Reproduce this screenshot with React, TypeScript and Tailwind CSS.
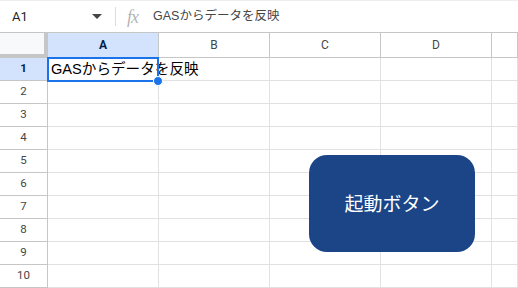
const cols = ['A', 'B', 'C', 'D', ''];
const rows = [1, 2, 3, 4, 5, 6, 7, 8, 9, 10];

export default function App() {
  return (
    <div className="relative w-[518px] h-[288px] overflow-hidden bg-white font-['Roboto','Noto_Sans_CJK_JP',sans-serif]">
      {/* formula bar */}
      <div className="flex items-center h-[32px] border-t border-[#eeeeee]">
        <div className="w-[86px] pl-[12px] text-[13px] text-[#1f1f1f]">A1</div>
        <svg width="10" height="6" viewBox="0 0 10 6" className="ml-[6px]">
          <path d="M0 0h10L5 5z" fill="#444746" />
        </svg>
        <div className="ml-[13px] w-px h-[19px] bg-[#dadce0]" />
        <div className="ml-[11px] w-[16px] text-[18px] leading-none italic text-[#b5b5b5] font-['Liberation_Serif',serif] tracking-[-1px]">
          fx
        </div>
        <div className="ml-[10px] text-[12.5px] text-[#444746] font-['Liberation_Sans','Noto_Sans_CJK_JP',sans-serif]">
          GASからデータを反映
        </div>
      </div>

      {/* grid */}
      <div className="grid grid-cols-[48px_111px_111px_111px_111px_1fr]">
        <div className="h-[26px] bg-[#f8f9fa] border-t border-t-[#c4c7c5] border-r-[4px] border-b-[4px] border-[#c4c7c5]" />
        {cols.map((c, i) => (
          <div
            key={i}
            className={`h-[26px] flex items-center justify-center text-[12px] border-t border-t-[#c4c7c5] border-r border-b border-[#c4c7c5] ${
              c === 'A' ? 'bg-[#d3e3fd] font-bold text-[#041e49]' : 'bg-white text-[#444746]'
            }`}
          >
            {c}
          </div>
        ))}
        {rows.map((r) => (
          <div key={r} className="contents">
            <div
              className={`h-[23px] flex items-center justify-center text-[11.5px] border-r border-b border-[#c4c7c5] ${
                r === 1 ? 'bg-[#d3e3fd] font-bold text-[#041e49]' : 'bg-white text-[#444746]'
              }`}
            >
              {r}
            </div>
            {cols.map((c, i) => (
              <div key={i} className="h-[23px] border-r border-b border-[#e1e1e1] overflow-visible">
                {r === 1 && c === 'A' && (
                  <div className="relative z-10 pl-[3px] pt-[1px] whitespace-nowrap text-[14.6px] leading-[21px] text-black font-['Liberation_Sans','Noto_Sans_CJK_JP',sans-serif]">
                    GASからデータを反映
                  </div>
                )}
              </div>
            ))}
          </div>
        ))}
      </div>

      {/* selection */}
      <div className="absolute left-[47px] top-[57px] w-[112px] h-[25px] border-2 border-[#1a73e8] z-20" />
      <div className="absolute left-[153px] top-[76px] w-[10px] h-[10px] rounded-full bg-[#1a73e8] border border-white z-30" />

      {/* drawing button */}
      <div className="absolute left-[309px] top-[155px] w-[166px] h-[97px] rounded-[18px] bg-[#1c4587] flex items-center justify-center text-white text-[19px] font-['Noto_Sans_CJK_JP',sans-serif]">
        起動ボタン
      </div>
    </div>
  );
}
